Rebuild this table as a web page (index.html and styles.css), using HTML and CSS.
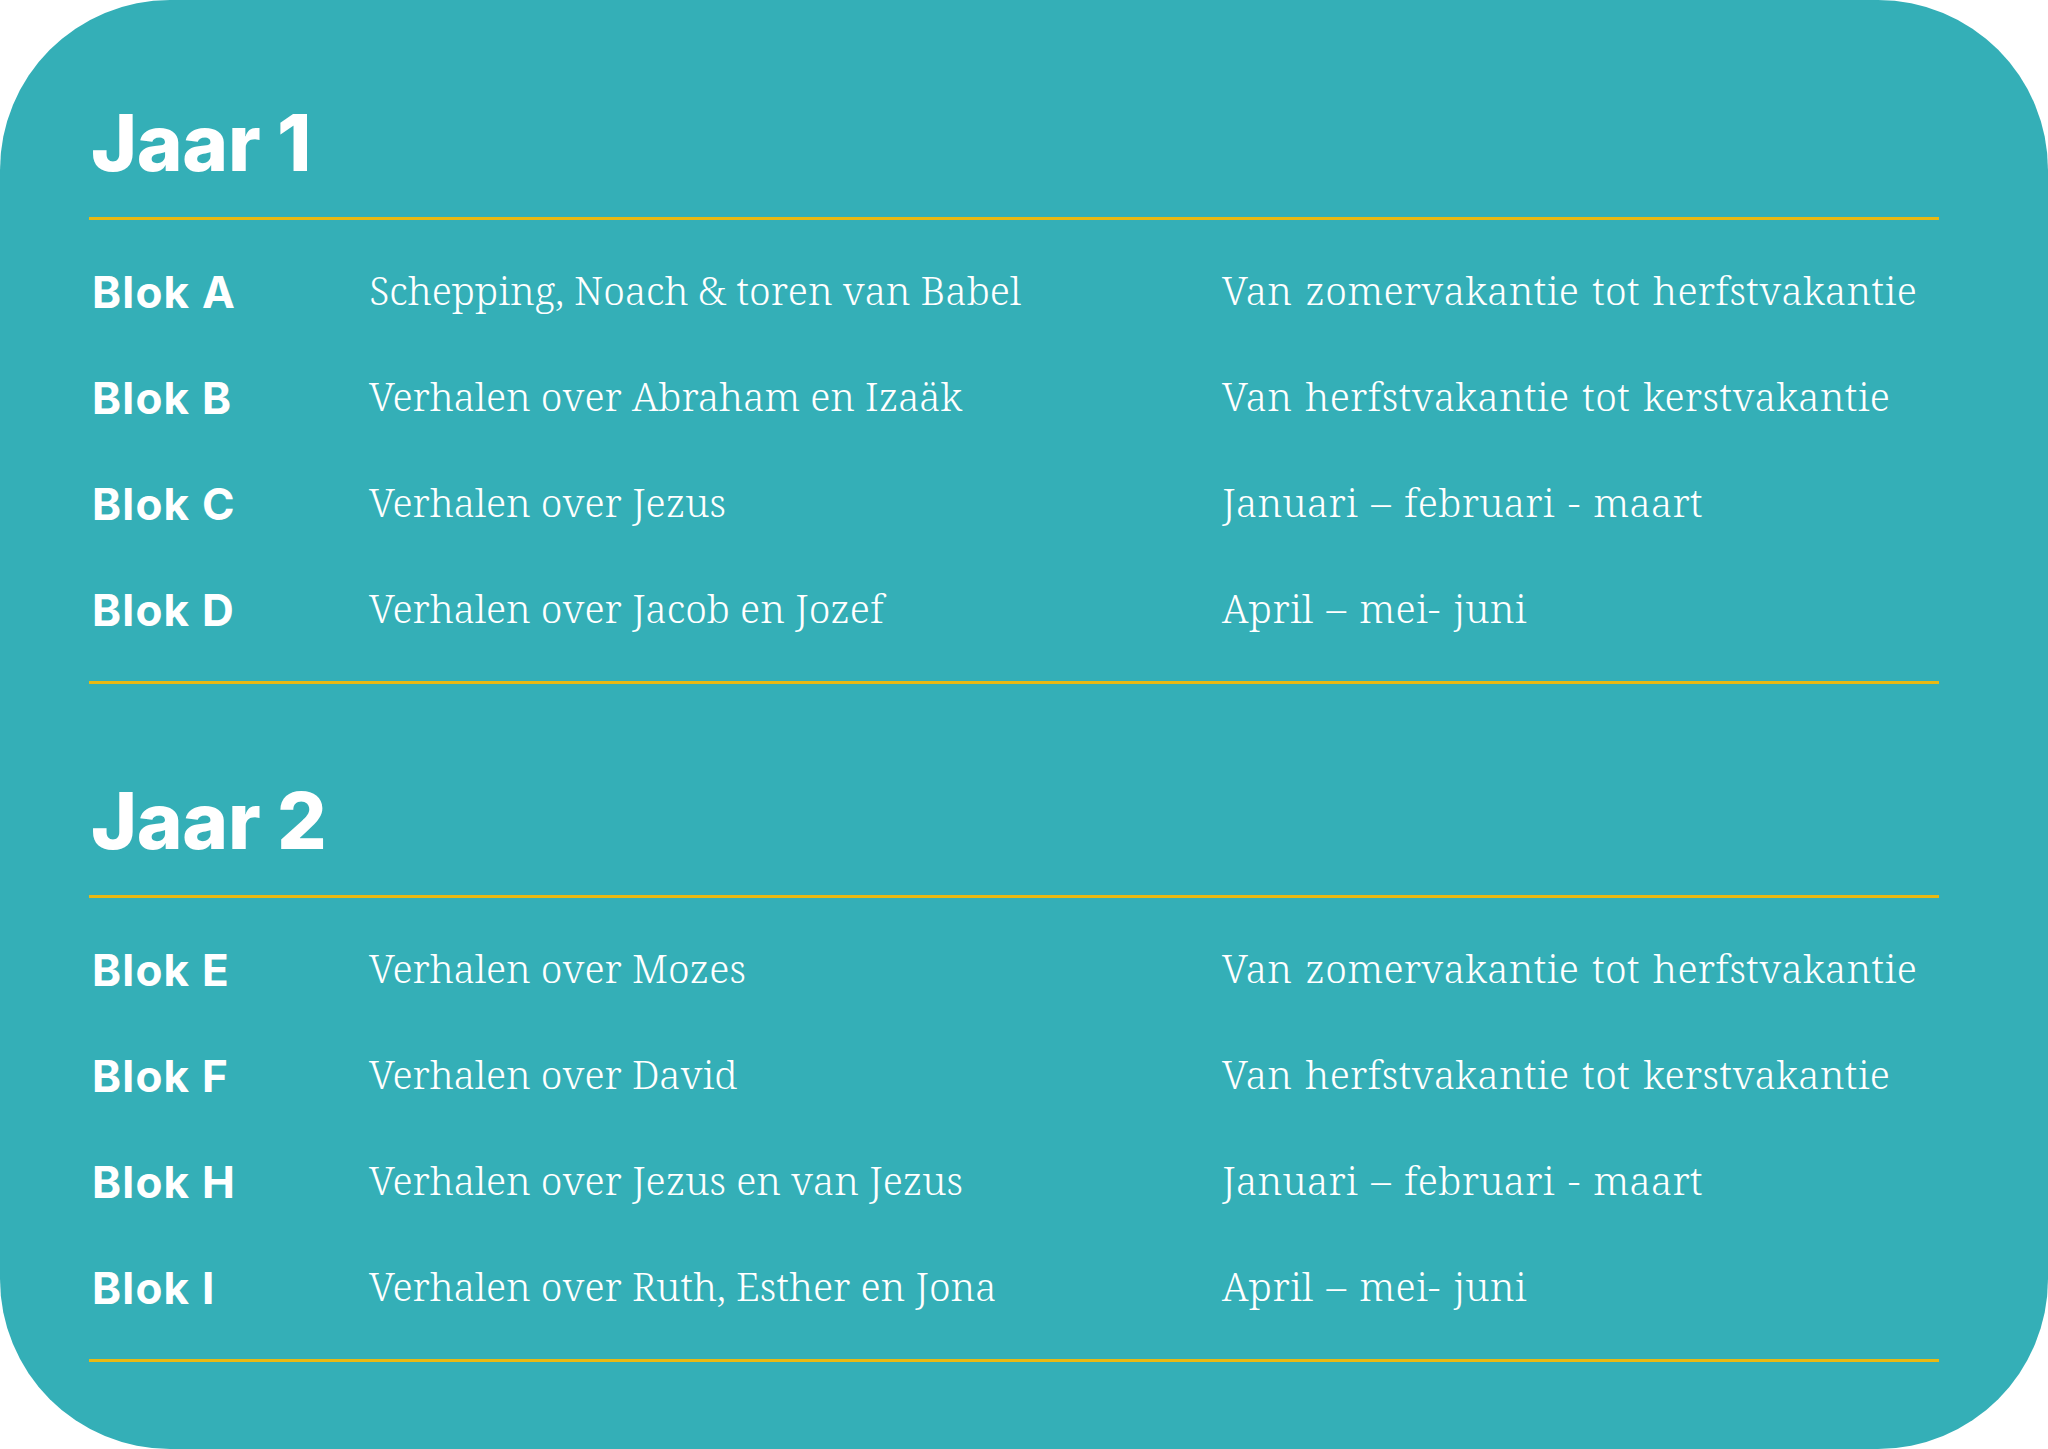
FILE: index.html
```html
<!DOCTYPE html>
<html lang="nl">
<head>
<meta charset="utf-8">
<title>Jaarplanning</title>
<link rel="stylesheet" href="styles.css">
</head>
<body>
<main class="card">
  <section class="year">
    <h2 class="year-title">Jaar 1</h2>
    <div class="rows">
      <div class="row"><span class="blok">Blok A</span><span class="topic">Schepping, Noach &amp; toren van Babel</span><span class="period">Van zomervakantie tot herfstvakantie</span></div>
      <div class="row"><span class="blok">Blok B</span><span class="topic">Verhalen over Abraham en Izaäk</span><span class="period">Van herfstvakantie tot kerstvakantie</span></div>
      <div class="row"><span class="blok">Blok C</span><span class="topic">Verhalen over Jezus</span><span class="period">Januari – februari - maart</span></div>
      <div class="row"><span class="blok">Blok D</span><span class="topic">Verhalen over Jacob en Jozef</span><span class="period">April – mei- juni</span></div>
    </div>
  </section>
  <section class="year">
    <h2 class="year-title">Jaar 2</h2>
    <div class="rows">
      <div class="row"><span class="blok">Blok E</span><span class="topic">Verhalen over Mozes</span><span class="period">Van zomervakantie tot herfstvakantie</span></div>
      <div class="row"><span class="blok">Blok F</span><span class="topic">Verhalen over David</span><span class="period">Van herfstvakantie tot kerstvakantie</span></div>
      <div class="row"><span class="blok">Blok H</span><span class="topic">Verhalen over Jezus en van Jezus</span><span class="period">Januari – februari - maart</span></div>
      <div class="row"><span class="blok">Blok I</span><span class="topic">Verhalen over Ruth, Esther en Jona</span><span class="period">April – mei- juni</span></div>
    </div>
  </section>
</main>
</body>
</html>
```
FILE: styles.css
```css
html, body {
  margin: 0;
  padding: 0;
  background: #ffffff;
}

.card {
  box-sizing: border-box;
  width: 2048px;
  height: 1449px;
  background: #34afb7;
  border-radius: 170px;
  padding: 6px 109px 0 89px;
  color: #ffffff;
}

.year-title {
  margin: 98px 0 0 0;
  padding: 0 0 35px 2px;
  font-family: "Inter", "Liberation Sans", sans-serif;
  font-weight: 800;
  font-size: 78px;
  line-height: 78px;
  letter-spacing: -0.3px;
  border-bottom: 3px solid #e9b913;
}

.rows {
  padding: 17px 0 20px 0;
  border-bottom: 3px solid #e9b913;
}

.row {
  display: grid;
  grid-template-columns: 280px 853px 1fr;
  height: 106px;
  line-height: 106px;
  white-space: nowrap;
}

.blok {
  padding-left: 3px;
  font-family: "Inter", "Liberation Sans", sans-serif;
  font-weight: 700;
  font-size: 44px;
  letter-spacing: 1.2px;
  transform: translateY(2px);
}

.topic,
.period {
  font-family: "Noto Serif", "DejaVu Serif", serif;
  font-weight: 300;
  font-size: 39px;
}

.period {
  letter-spacing: 0.35px;
  word-spacing: 2.5px;
}
```
